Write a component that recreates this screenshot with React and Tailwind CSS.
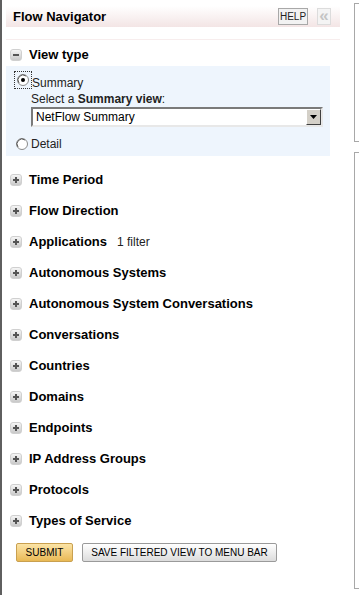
import React from 'react';

const sections = [
  { label: 'Time Period' },
  { label: 'Flow Direction' },
  { label: 'Applications', note: '1 filter' },
  { label: 'Autonomous Systems' },
  { label: 'Autonomous System Conversations' },
  { label: 'Conversations' },
  { label: 'Countries' },
  { label: 'Domains' },
  { label: 'Endpoints' },
  { label: 'IP Address Groups' },
  { label: 'Protocols' },
  { label: 'Types of Service' },
];

const ToggleIcon = ({ open }) => (
  <div className="w-[12px] h-[12px] rounded-[3px] bg-gradient-to-b from-[#f6f6f6] to-[#c9c9c9] border border-[#d0d0d0] flex items-center justify-center shrink-0">
    <svg width="8" height="8" viewBox="0 0 8 8">
      <rect x="1" y="3" width="6" height="2" fill="#555" />
      {!open && <rect x="3" y="1" width="2" height="6" fill="#555" />}
    </svg>
  </div>
);

const Radio = ({ checked }) => (
  <svg width="12" height="12" viewBox="0 0 12 12" className="shrink-0">
    <circle cx="6" cy="6" r="5.5" fill="#fff" stroke="#8a8a8a" />
    <path d="M2 9 A5 5 0 0 1 9 2" fill="none" stroke="#5a5a5a" strokeWidth="1" />
    {checked && <circle cx="6" cy="6" r="2" fill="#000" />}
  </svg>
);

const App = () => {
  return (
    <div className="w-[359px] h-[595px] bg-white flex overflow-hidden font-['Liberation_Sans',Arial,sans-serif]">
      <div className="w-[340px] h-full border-l-2 border-[#5f5f5f] shrink-0 flex flex-col pl-[4px]">
        {/* header */}
        <div className="mt-[6px] h-[21px] flex items-center bg-gradient-to-b from-white to-[#f3e5e5] pl-[7px] pr-[9px]">
          <span className="text-[13px] font-bold text-black">Flow Navigator</span>
          <div className="ml-auto flex items-center gap-[9px]">
            <div className="h-[17px] w-[30px] border border-[#a8a8a8] bg-[#f2f2f2] flex items-center justify-center text-[10px] text-[#222]">HELP</div>
            <div className="h-[17px] w-[14px] border border-[#dcdcdc] bg-[#f4f4f4] flex items-center justify-center text-[17px] leading-none text-[#c4c4c4] font-bold pb-[2px]">«</div>
          </div>
        </div>
        <div className="mt-[12px] h-px bg-[#f7eded]" />

        {/* view type */}
        <div className="h-[26px] pt-[4px] flex items-center gap-[7px] pl-[4px]">
          <ToggleIcon open />
          <span className="text-[13px] font-bold text-black">View type</span>
        </div>
        <div className="w-[324px] h-[90px] bg-[#eef5fd] pt-[5px] pl-[8px] flex flex-col">
          <div className="flex items-center h-[18px]">
            <div className="w-[18px] h-[18px] border border-dotted border-[#333] flex items-center justify-center">
              <Radio checked />
            </div>
            <span className="text-[12px] leading-[14px] text-[#222] mt-[5px]">Summary</span>
          </div>
          <div className="pl-[17px] text-[12px] text-[#222] leading-[14px] mt-[3px]">
            Select a <span className="font-bold">Summary view</span>:
          </div>
          <div className="ml-[17px] mt-px w-[292px] h-[20px] bg-white border-2 border-t-[#7a7a7a] border-l-[#7a7a7a] border-b-[#e8e8e8] border-r-[#e8e8e8] flex items-center">
            <span className="flex-1 pl-[3px] text-[12px] text-black">NetFlow Summary</span>
            <div className="w-[15px] h-[16px] bg-[#d4d0c8] border border-t-white border-l-white border-b-[#404040] border-r-[#404040] flex items-center justify-center">
              <svg width="7" height="4" viewBox="0 0 7 4"><path d="M0 0h7L3.5 4z" fill="#000" /></svg>
            </div>
          </div>
          <div className="flex items-center h-[14px] mt-[10px] pl-[2px]">
            <Radio />
            <span className="ml-[3px] text-[12px] leading-[14px] text-[#222]">Detail</span>
          </div>
        </div>

        {/* sections */}
        <div className="mt-[8px] flex flex-col">
          {sections.map((s) => (
            <div key={s.label} className="h-[31px] flex items-center gap-[7px] pl-[4px]">
              <ToggleIcon />
              <span className="text-[13px] font-bold text-black">{s.label}</span>
              {s.note && <span className="ml-[3px] text-[12px] text-[#222]">{s.note}</span>}
            </div>
          ))}
        </div>

        {/* buttons */}
        <div className="mt-[7px] flex items-center gap-[9px] pl-[10px]">
          <button className="h-[19px] w-[57px] rounded-[2px] border border-[#c9a050] bg-gradient-to-b from-[#fbe4a6] to-[#e9b954] text-[10px] text-black">SUBMIT</button>
          <button className="h-[19px] w-[195px] rounded-[2px] border border-[#9a9a9a] bg-gradient-to-b from-white to-[#dcdcdc] text-[10px] text-black">SAVE FILTERED VIEW TO MENU BAR</button>
        </div>
      </div>

      {/* right panels */}
      <div className="flex-1 ml-[14px] flex flex-col">
        <div className="mt-[3px] h-[139px] border-l border-t border-b border-[#a8a8a8]" />
        <div className="mt-[10px] h-[437px] border-l border-t border-b border-[#a8a8a8]" />
      </div>
    </div>
  );
};

export default App;
